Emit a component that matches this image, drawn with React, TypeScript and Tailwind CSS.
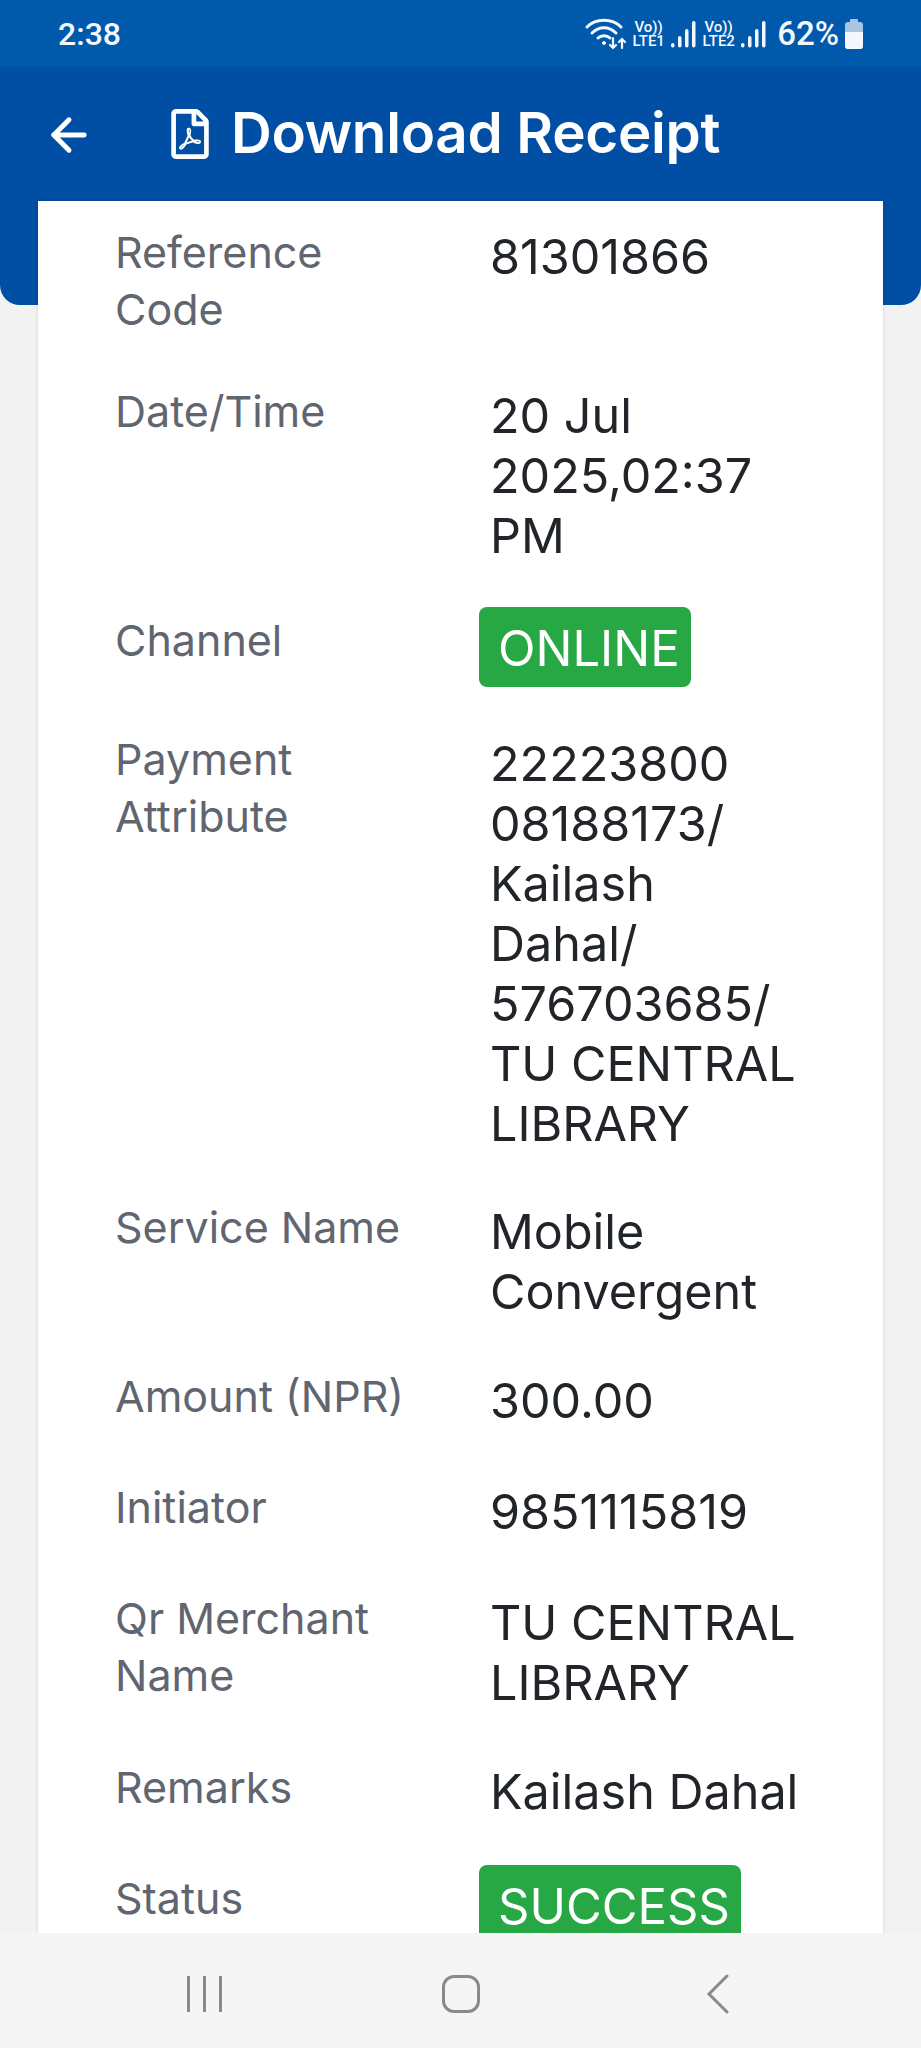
import { ArrowLeft } from "lucide-react";
import { FaRegFilePdf } from "react-icons/fa";

type Row = {
  label: string[];
  value?: string[];
  badge?: string;
  className: string;
};

const rows: Row[] = [
  { label: ["Reference", "Code"], value: ["81301866"], className: "h-[159px]" },
  { label: ["Date/Time"], value: ["20 Jul", "2025,02:37", "PM"], className: "h-[229px]" },
  { label: ["Channel"], badge: "ONLINE", className: "h-[119px]" },
  {
    label: ["Payment", "Attribute"],
    value: ["22223800", "08188173/", "Kailash", "Dahal/", "576703685/", "TU CENTRAL", "LIBRARY"],
    className: "h-[468px]",
  },
  { label: ["Service Name"], value: ["Mobile", "Convergent"], className: "h-[169px]" },
  { label: ["Amount (NPR)"], value: ["300.00"], className: "h-[111px]" },
  { label: ["Initiator"], value: ["9851115819"], className: "h-[111px]" },
  { label: ["Qr Merchant", "Name"], value: ["TU CENTRAL", "LIBRARY"], className: "h-[169px]" },
  { label: ["Remarks"], value: ["Kailash Dahal"], className: "h-[111px]" },
  { label: ["Status"], badge: "SUCCESS", className: "h-[119px]" },
];

function Lines({ lines }: { lines: string[] }) {
  return (
    <>
      {lines.map((line) => (
        <span key={line} className="block whitespace-nowrap">
          {line}
        </span>
      ))}
    </>
  );
}

function NetworkGroup({ line }: { line: string }) {
  return (
    <div className="flex items-end gap-[6px]">
      <div className="flex w-[33px] flex-col items-center text-[15px] leading-[14px] font-medium">
        <span>Vo))</span>
        <span>{line}</span>
      </div>
      <svg width="26" height="28" viewBox="0 0 26 28" fill="#f4f8fc">
        <rect x="0" y="23" width="3.5" height="4.5" rx="1.7" />
        <rect x="7" y="16" width="3.5" height="11.5" rx="1.7" />
        <rect x="14" y="9" width="3.5" height="18.5" rx="1.7" />
        <rect x="21" y="1" width="3.5" height="26.5" rx="1.7" />
      </svg>
    </div>
  );
}

function StatusBar() {
  return (
    <div className="flex h-[67px] shrink-0 items-center justify-between bg-[#0059ab] pr-[58px] pl-[58px] font-['Roboto',sans-serif] text-[#f4f8fc]">
      <span className="text-[32px] font-medium">2:38</span>
      <div className="flex items-center gap-[5px]">
        <svg width="42" height="32" viewBox="0 0 42 32" fill="none" stroke="#f4f8fc" strokeLinecap="round">
          <path d="M2 9C11 0 27 0 36 9" strokeWidth="3" />
          <path d="M7 15C14 8 24 8 31 15" strokeWidth="3" />
          <path d="M13 20C16 17 22 17 25 20" strokeWidth="3" />
          <circle cx="19" cy="25" r="1.5" fill="#f4f8fc" strokeWidth="1" />
          <path d="M28 20V30M25 27L28 30L31 27" strokeWidth="2.2" />
          <path d="M37 30V21M34 24L37 21L40 24" strokeWidth="2.2" />
        </svg>
        <NetworkGroup line="LTE1" />
        <NetworkGroup line="LTE2" />
        <span className="ml-[5px] text-[33px] leading-none font-medium">62%</span>
        <div className="ml-[1px] flex h-[30px] w-[18px] flex-col items-center">
          <div className="h-[3px] w-[8px] rounded-t-[1px] bg-[#a8c4e0]" />
          <div className="flex flex-1 flex-col justify-end overflow-hidden rounded-[3px] bg-[#a8c4e0]">
            <div className="h-[17px] w-[18px] bg-[#f4f8fc]" />
          </div>
        </div>
      </div>
    </div>
  );
}

export default function App() {
  return (
    <div className="flex h-[2048px] w-[921px] flex-col overflow-hidden bg-[#f3f2f3] font-['Inter',sans-serif]">
      <StatusBar />
      <div className="flex min-h-0 flex-1 flex-col overflow-hidden">
        <header className="flex h-[238px] shrink-0 items-start rounded-b-[20px] bg-[#014ea5] pt-[34px] pl-[43px] text-white">
          <ArrowLeft size={52} strokeWidth={2.3} className="mt-[8px]" />
          <FaRegFilePdf size={50} className="mt-[8px] ml-[70px]" />
          <h1 className="ml-[16px] text-[56.5px] leading-[64px] font-semibold tracking-[-0.3px] whitespace-nowrap">
            Download Receipt
          </h1>
        </header>
        <main className="z-10 mx-[38px] -mt-[104px] flex-1 bg-white pt-[23px] pl-[77px] shadow-[0_0_4px_rgba(0,0,0,0.12)]">
          {rows.map((row) => (
            <div key={row.label[0]} className={`grid grid-cols-[375px_1fr] ${row.className}`}>
              <div className="text-[43px] leading-[57px] text-[#60656f]">
                <Lines lines={row.label} />
              </div>
              {row.badge ? (
                <div>
                  <span className="-mt-[5px] -ml-[11px] inline-block h-[80px] rounded-[8px] bg-[#28a745] pr-[11px] pl-[19px] align-top text-[49px] leading-[84px] text-white">
                    {row.badge}
                  </span>
                </div>
              ) : (
                <div className="pt-[3px] text-[48.5px] leading-[60px] text-[#212529]">
                  <Lines lines={row.value ?? []} />
                </div>
              )}
            </div>
          ))}
        </main>
      </div>
      <nav className="flex h-[115px] shrink-0 items-center bg-[#f5f5f5]">
        <div className="flex w-[408px] justify-center pt-[7px]">
          <div className="flex w-[35px] justify-between">
            <span className="h-[36px] w-[3px] bg-[#8a8a8a]" />
            <span className="h-[36px] w-[3px] bg-[#8a8a8a]" />
            <span className="h-[36px] w-[3px] bg-[#8a8a8a]" />
          </div>
        </div>
        <div className="flex w-[106px] justify-center pt-[7px]">
          <span className="h-[38px] w-[38px] rounded-[12px] border-[3px] border-[#8a8a8a]" />
        </div>
        <div className="flex flex-1 justify-center pt-[7px]">
          <svg width="24" height="40" viewBox="0 0 24 40" fill="none" stroke="#8a8a8a" strokeWidth="3" strokeLinecap="round">
            <path d="M21 2L3 20L21 38" />
          </svg>
        </div>
      </nav>
    </div>
  );
}
